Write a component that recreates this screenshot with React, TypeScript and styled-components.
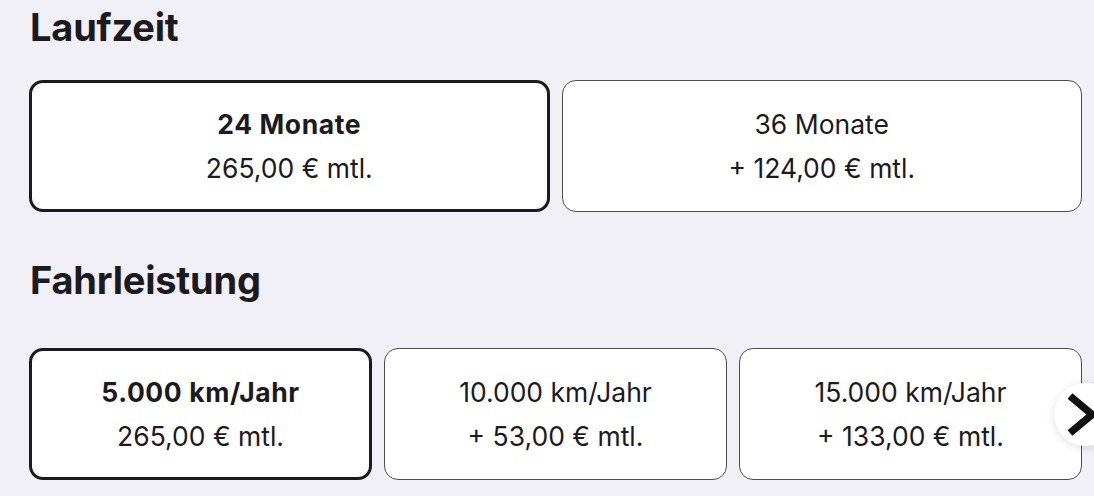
import React from "react";
import styled, { createGlobalStyle } from "styled-components";

const GlobalStyle = createGlobalStyle`
  html, body {
    margin: 0;
    padding: 0;
    background: #f2f0f7;
    font-family: Inter, "Noto Sans", sans-serif;
    color: #1b1a1e;
    overflow: hidden;
  }
`;

type Option = { title: string; price: string; selected?: boolean };

const laufzeit: Option[] = [
  { title: "24 Monate", price: "265,00 € mtl.", selected: true },
  { title: "36 Monate", price: "+ 124,00 € mtl." },
];

const fahrleistung: Option[] = [
  { title: "5.000 km/Jahr", price: "265,00 € mtl.", selected: true },
  { title: "10.000 km/Jahr", price: "+ 53,00 € mtl." },
  { title: "15.000 km/Jahr", price: "+ 133,00 € mtl." },
];

export default function App() {
  return (
    <>
      <GlobalStyle />
      <Page>
        <Heading>Laufzeit</Heading>
        <Row $cols={2}>
          {laufzeit.map((o) => (
            <Card key={o.title} $selected={!!o.selected}>
              <Title $selected={!!o.selected}>{o.title}</Title>
              <Price>{o.price}</Price>
            </Card>
          ))}
        </Row>

        <Heading $spaced>Fahrleistung</Heading>
        <Row $cols={3}>
          {fahrleistung.map((o) => (
            <Card key={o.title} $selected={!!o.selected}>
              <Title $selected={!!o.selected}>{o.title}</Title>
              <Price>{o.price}</Price>
            </Card>
          ))}
          <NextButton aria-label="Weiter">
            <svg width="63" height="63" viewBox="0 0 63 63">
              <polyline
                points="16,13 38,31.5 16,50"
                fill="none"
                stroke="#111"
                strokeWidth="7.5"
                strokeLinejoin="miter"
              />
            </svg>
          </NextButton>
        </Row>
      </Page>
    </>
  );
}

/* ---------------- Styled Components ---------------- */

const Page = styled.div`
  width: 1094px;
  height: 496px;
  box-sizing: border-box;
  padding: 0 12px 0 29px;
  display: flex;
  flex-direction: column;
`;

const Heading = styled.h2<{ $spaced?: boolean }>`
  margin: ${({ $spaced }) => ($spaced ? "41px 0 41px 1px" : "0 0 26px 1px")};
  height: 54px;
  line-height: 54px;
  font-size: 38px;
  font-weight: 700;
  letter-spacing: -0.2px;
`;

const Row = styled.div<{ $cols: number }>`
  position: relative;
  display: grid;
  grid-template-columns: repeat(${({ $cols }) => $cols}, 1fr);
  gap: 12px;
`;

const Card = styled.div<{ $selected: boolean }>`
  box-sizing: border-box;
  height: 132px;
  background: #fff;
  border: ${({ $selected }) => ($selected ? "3.5px solid #1b1a1e" : "1.5px solid #4d4b52")};
  border-radius: 14px;
  display: flex;
  flex-direction: column;
  align-items: center;
  justify-content: center;
`;

const Title = styled.div<{ $selected: boolean }>`
  font-size: 26.5px;
  line-height: 44px;
  font-weight: ${({ $selected }) => ($selected ? 700 : 400)};
  letter-spacing: ${({ $selected }) => ($selected ? "0.6px" : "0")};
`;

const Price = styled.div`
  font-size: 26.5px;
  line-height: 44px;
`;

const NextButton = styled.button`
  position: absolute;
  right: -35px;
  top: 35px;
  width: 63px;
  height: 63px;
  padding: 0;
  border: none;
  border-radius: 50%;
  background: #fff;
  box-shadow: 0 2px 10px rgba(0, 0, 0, 0.12);
  display: flex;
  align-items: center;
  justify-content: center;
  cursor: pointer;
`;
